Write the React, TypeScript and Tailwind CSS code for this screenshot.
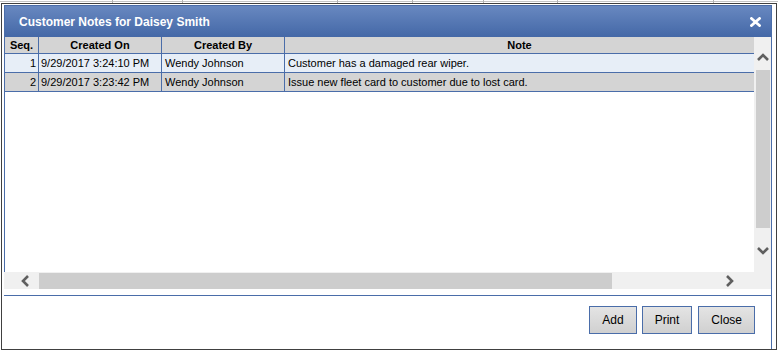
import React from "react";

const rows = [
  { seq: 1, on: "9/29/2017 3:24:10 PM", by: "Wendy Johnson", note: "Customer has a damaged rear wiper.", bg: "bg-[#e7eef7]" },
  { seq: 2, on: "9/29/2017 3:23:42 PM", by: "Wendy Johnson", note: "Issue new fleet card to customer due to lost card.", bg: "bg-[#d4d4d4]" },
];

const Chevron = ({ dir }: { dir: "up" | "down" | "left" | "right" }) => {
  const paths: Record<string, string> = {
    up: "M1 7 L6 2 L11 7",
    down: "M1 2 L6 7 L11 2",
    left: "M7 1 L2 6 L7 11",
    right: "M2 1 L7 6 L2 11",
  };
  const vert = dir === "up" || dir === "down";
  return (
    <svg width={vert ? 12 : 9} height={vert ? 9 : 12} viewBox={vert ? "0 0 12 9" : "0 0 9 12"}>
      <path d={paths[dir]} fill="none" stroke="#5f5f5f" strokeWidth="2.6" />
    </svg>
  );
};

export default function App() {
  const strip = [113, 70, 155, 75, 71, 74, 156];
  return (
    <div className="w-[778px] h-[351px] bg-white overflow-hidden font-['Liberation_Sans',Arial,sans-serif] text-black">
      {/* backdrop strip */}
      <div className="flex h-[3px]">
        {strip.map((w, i) => (
          <div key={i} style={{ width: w }} className="h-[3px] border-r border-[#b4b4b4] shrink-0">
            <div className="mt-px h-px bg-[#c4c4c4]" />
          </div>
        ))}
        <div className="flex-1 h-[3px]">
          <div className="mt-px h-px bg-[#c4c4c4]" />
        </div>
      </div>
      {/* frame */}
      <div className="ml-[1px] w-[776px] h-[347px] border border-[#404040]">
        <div className="mt-px ml-[2px] w-[768px] flex flex-col">
          {/* title */}
          <div className="h-[32px] flex items-center justify-between pl-[14px] pr-[10px] bg-gradient-to-b from-[#6888c0] to-[#4468a7] border-x border-t border-[#4a6da9]">
            <span className="text-white font-bold text-[12px]">Customer Notes for Daisey Smith</span>
            <svg width="11" height="10" viewBox="0 0 11 10">
              <path d="M1.5 1.5 L9.5 8.5 M9.5 1.5 L1.5 8.5" stroke="white" strokeWidth="2.8" strokeLinecap="square" />
            </svg>
          </div>
          {/* grid */}
          <div className="border-r border-[#4a6da9] flex flex-col">
            <div className="h-[235px] flex">
              <div className="w-[750px] border-l border-[#4a6da9] bg-white">
                <div className="flex h-[17px] bg-[#d4d4d4] border-b border-[#4a6da9] text-[11px] font-bold">
                  <div className="w-[34px] border-r border-[#4a6da9] flex items-center justify-center">Seq.</div>
                  <div className="w-[123px] border-r border-[#4a6da9] flex items-center justify-center">Created On</div>
                  <div className="w-[123px] border-r border-[#4a6da9] flex items-center justify-center">Created By</div>
                  <div className="flex-1 flex items-center justify-center">Note</div>
                </div>
                {rows.map((r) => (
                  <div key={r.seq} className={`flex h-[19px] border-b border-[#4a6da9] text-[11px] ${r.bg}`}>
                    <div className="w-[34px] border-r border-[#4a6da9] flex items-center justify-end pr-[2px]">{r.seq}</div>
                    <div className="w-[123px] border-r border-[#4a6da9] flex items-center pl-[2px] whitespace-nowrap">{r.on}</div>
                    <div className="w-[123px] border-r border-[#4a6da9] flex items-center pl-[3px] whitespace-nowrap">{r.by}</div>
                    <div className="flex-1 flex items-center pl-[3px] whitespace-nowrap">{r.note}</div>
                  </div>
                ))}
              </div>
              {/* vertical scrollbar */}
              <div className="w-[17px] bg-[#f0f0f0] flex flex-col items-center">
                <div className="h-[33px] flex items-end pb-[8px]">
                  <Chevron dir="up" />
                </div>
                <div className="w-[14px] h-[158px] bg-[#cdcdcd]" />
                <div className="h-[30px] flex items-center pt-[14px]">
                  <Chevron dir="down" />
                </div>
              </div>
            </div>
            {/* horizontal scrollbar */}
            <div className="h-[17px] flex bg-[#f0f0f0]">
              <div className="w-[35px] flex items-center justify-center pl-[8px]">
                <Chevron dir="left" />
              </div>
              <div className="w-[573px] h-[16px] mt-px bg-[#cdcdcd]" />
              <div className="flex-1 flex items-center justify-end pr-[37px]">
                <Chevron dir="right" />
              </div>
            </div>
            <div className="h-[6px] bg-white" />
          </div>
          {/* footer */}
          <div className="h-[54px] border-t border-r border-[#4a6da9] flex justify-end items-start pt-[10px] pr-[16px] gap-[5px]">
            <button className="h-[28px] px-[12px] border border-[#4a6da9] bg-gradient-to-b from-[#e4e4e4] to-[#d0d0d0] text-[12px] font-['Liberation_Sans',Arial,sans-serif]">Add</button>
            <button className="h-[28px] px-[12px] border border-[#4a6da9] bg-gradient-to-b from-[#e4e4e4] to-[#d0d0d0] text-[12px] font-['Liberation_Sans',Arial,sans-serif]">Print</button>
            <button className="h-[28px] px-[12px] ml-px border border-[#4a6da9] bg-gradient-to-b from-[#e4e4e4] to-[#d0d0d0] text-[12px] font-['Liberation_Sans',Arial,sans-serif]">Close</button>
          </div>
        </div>
      </div>
    </div>
  );
}
